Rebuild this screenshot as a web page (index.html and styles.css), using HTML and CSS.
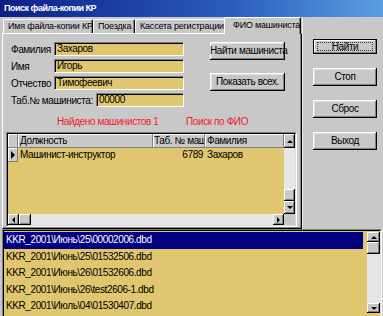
FILE: index.html
```html
<!DOCTYPE html>
<html lang="ru">
<head>
    <meta charset="UTF-8">
    <title>Поиск файла-копии КР</title>
    <link rel="stylesheet" href="styles.css">
</head>
<body>

<div class="window">
    <div class="titlebar">Поиск файла-копии КР</div>

    <div class="main">
        <div class="pages">
            <div class="tabs">
                <div class="tab tab--1">Имя файла-копии КР</div>
                <div class="tab tab--2">Поездка</div>
                <div class="tab tab--3">Кассета регистрации</div>
                <div class="tab tab--active">ФИО машиниста</div>
            </div>

            <div class="sheet">
                <div class="top">
                    <div class="fields">
                        <div class="row"><span class="lbl">Фамилия</span><span class="edit">Захаров</span></div>
                        <div class="row"><span class="lbl">Имя</span><span class="edit">Игорь</span></div>
                        <div class="row"><span class="lbl">Отчество</span><span class="edit">Тимофеевич</span></div>
                        <div class="row row--tab"><span class="lbl lbl--wide">Таб.№ машиниста:</span><span class="edit edit--short">00000</span></div>
                    </div>
                    <div class="pbtns">
                        <div class="btn btn--wide">Найти машиниста</div>
                        <div class="btn btn--wide">Показать всех.</div>
                    </div>
                </div>

                <div class="status">
                    <span class="found">Найдено машинистов 1</span>
                    <span>Поиск по ФИО</span>
                </div>

                <div class="grid">
                    <div class="grid-in">
                        <div class="gbody">
                            <div class="gcols">
                                <div class="grow ghead">
                                    <div class="c c--ind"></div>
                                    <div class="c c--pos">Должность</div>
                                    <div class="c c--num">Таб. № маш</div>
                                    <div class="c c--name">Фамилия</div>
                                </div>
                                <div class="grow">
                                    <div class="c c--ind"><span class="tri-r"></span></div>
                                    <div class="c c--pos">Машинист-инструктор</div>
                                    <div class="c c--num num">6789</div>
                                    <div class="c c--name">Захаров</div>
                                </div>
                                <div class="gfill"></div>
                            </div>
                            <div class="vscroll">
                                <div class="sbtn sbtn--head"><span class="tri-u"></span></div>
                                <div class="track"></div>
                                <div class="thumb"></div>
                                <div class="sbtn sbtn--down"><span class="tri-d"></span></div>
                            </div>
                        </div>
                        <div class="hscroll">
                            <div class="sbtn sbtn--h"><span class="tri-l"></span></div>
                            <div class="thumb thumb--h"></div>
                            <div class="track"></div>
                            <div class="sbtn sbtn--h"><span class="tri-r small"></span></div>
                            <div class="corner"></div>
                        </div>
                    </div>
                </div>
            </div>
        </div>

        <div class="side">
            <div class="btn btn--default"><span class="focus">Найти</span></div>
            <div class="btn">Стоп</div>
            <div class="btn">Сброс</div>
            <div class="btn">Выход</div>
        </div>
    </div>

    <div class="list">
        <div class="list-in">
            <div class="items">
                <div class="item item--sel">KKR_2001\Июнь\25\00002006.dbd</div>
                <div class="item">KKR_2001\Июнь\25\01532506.dbd</div>
                <div class="item">KKR_2001\Июнь\26\01532606.dbd</div>
                <div class="item">KKR_2001\Июнь\26\test2606-1.dbd</div>
                <div class="item">KKR_2001\Июль\04\01530407.dbd</div>
            </div>
            <div class="lscroll">
                <div class="sbtn sbtn--l"><span class="tri-u"></span></div>
                <div class="thumb thumb--l"></div>
                <div class="track"></div>
                <div class="sbtn sbtn--l"><span class="tri-d"></span></div>
            </div>
        </div>
    </div>
</div>

</body>
</html>
```

FILE: styles.css
```css
* {
    margin: 0;
    padding: 0;
    box-sizing: border-box;
}

body {
    background: #c8c8c8;
}

.window {
    width: 383px;
    height: 316px;
    overflow: hidden;
    background: #c8c8c8;
    font-family: "Liberation Sans", Arial, sans-serif;
    font-size: 10px;
    letter-spacing: -0.4px;
    color: #000;
}

.titlebar {
    height: 17px;
    line-height: 16px;
    padding-left: 4px;
    color: #fff;
    font-weight: bold;
    font-size: 9px;
    letter-spacing: -0.5px;
    background: linear-gradient(to right, #0c1f86, #2a5cc0 60%, #5a9fe2);
}

.main {
    display: flex;
    height: 212px;
}

/* page control */
.pages {
    width: 302px;
    padding-left: 2px;
    display: flex;
    flex-direction: column;
}

.tabs {
    height: 16px;
    display: flex;
    align-items: flex-end;
    padding-left: 1px;
    font-size: 9px;
    letter-spacing: -0.2px;
}

.tab {
    height: 14px;
    line-height: 12px;
    padding-left: 4px;
    white-space: nowrap;
    border-top: 1px solid #fff;
    border-left: 1px solid #fff;
    border-right: 1px solid #000;
    box-shadow: inset -1px 0 #808080;
    border-radius: 2px 2px 0 0;
}

.tab--1 { width: 90px; }
.tab--2 { width: 42px; }
.tab--3 { width: 91px; }

.tab--active {
    position: relative;
    z-index: 1;
    height: 17px;
    width: 77px;
    margin: 0 0 -1px -2px;
    padding-left: 8px;
    line-height: 14px;
    background: #c8c8c8;
}

.sheet {
    flex: 1;
    border-top: 1px solid #fff;
    border-left: 1px solid #fff;
    border-right: 1px solid #000;
    border-bottom: 1px solid #000;
    box-shadow: inset -1px -1px #808080;
}

.top {
    display: flex;
    padding-top: 8px;
}

.fields {
    width: 181px;
    padding-left: 8px;
}

.row {
    display: flex;
    align-items: center;
    height: 14px;
    margin-bottom: 3px;
}

.row--tab {
    margin-top: 2px;
}

.lbl {
    width: 43px;
    white-space: nowrap;
}

.lbl--wide {
    width: 85px;
}

.edit {
    width: 130px;
    height: 14px;
    line-height: 11px;
    padding-left: 2px;
    background: #dfc66f;
    border-top: 1px solid #808080;
    border-left: 1px solid #808080;
    border-right: 1px solid #fff;
    border-bottom: 1px solid #fff;
    box-shadow: inset 1px 1px #000;
}

.edit--short {
    width: 88px;
}

.pbtns {
    margin-left: 26px;
    display: flex;
    flex-direction: column;
    gap: 13px;
}

.btn {
    width: 64px;
    height: 18px;
    line-height: 17px;
    text-align: center;
    white-space: nowrap;
    background: #c8c8c8;
    box-shadow: inset -1px -1px #000, inset 1px 1px #fff, inset -2px -2px #808080, inset 2px 2px #e0e0e0;
}

.btn--wide {
    width: 75px;
}

.btn--default {
    height: 15px;
    line-height: 13px;
    border: 1px solid #000;
    padding: 2px 3px;
    box-shadow: inset -1px -1px #808080, inset 1px 1px #fff;
}

.focus {
    display: block;
    height: 9px;
    line-height: 8px;
    border: 1px dotted #333;
}

.side {
    flex: 1;
    display: flex;
    flex-direction: column;
    align-items: flex-start;
    gap: 14px;
    padding: 22px 0 0 10px;
    border-left: 1px solid #e8e8e8;
}

.status {
    display: flex;
    margin-top: 6px;
    padding-left: 54px;
    height: 12px;
    line-height: 12px;
    color: #f0202a;
}

.found {
    width: 129px;
}

/* db grid */
.grid {
    margin: 4px 0 0 3px;
    width: 291px;
    height: 95px;
    border: 1px solid;
    border-color: #808080 #fff #fff #808080;
}

.grid-in {
    height: 100%;
    border: 1px solid;
    border-color: #000 #dcdcdc #dcdcdc #000;
    display: flex;
    flex-direction: column;
}

.gbody {
    flex: 1;
    display: flex;
}

.gcols {
    flex: 1;
    display: flex;
    flex-direction: column;
    background: #dfc66f;
}

.grow {
    display: flex;
    height: 14px;
    line-height: 13px;
}

.c {
    white-space: nowrap;
    overflow: hidden;
    padding-left: 2px;
}

.c--ind {
    width: 10px;
    padding: 0;
    background: #c8c8c8;
    border-right: 1px solid #808080;
    border-bottom: 1px solid #808080;
    box-shadow: inset 1px 1px #fff;
    display: flex;
    align-items: center;
    justify-content: center;
}

.c--pos { width: 135px; }
.c--num { width: 52px; padding-left: 1px; }
.c--name { flex: 1; }

.num {
    text-align: right;
    padding-right: 2px;
}

.ghead .c {
    background: #c8c8c8;
    border-right: 1px solid #808080;
    border-bottom: 1px solid #808080;
    box-shadow: inset 1px 1px #fff;
}

.gfill {
    flex: 1;
}

.tri-r {
    width: 0;
    height: 0;
    border-top: 4px solid transparent;
    border-bottom: 4px solid transparent;
    border-left: 4px solid #000;
}

.tri-r.small {
    border-top-width: 3px;
    border-bottom-width: 3px;
    border-left-width: 3px;
}

.tri-l {
    width: 0;
    height: 0;
    border-top: 3px solid transparent;
    border-bottom: 3px solid transparent;
    border-right: 3px solid #000;
}

.tri-u {
    width: 0;
    height: 0;
    border-left: 3px solid transparent;
    border-right: 3px solid transparent;
    border-bottom: 3px solid #000;
}

.tri-d {
    width: 0;
    height: 0;
    border-left: 3px solid transparent;
    border-right: 3px solid transparent;
    border-top: 3px solid #000;
}

/* scrollbars */
.vscroll {
    width: 11px;
    display: flex;
    flex-direction: column;
}

.hscroll {
    height: 11px;
    display: flex;
}

.sbtn,
.thumb {
    background: #c8c8c8;
    box-shadow: inset -1px -1px #000, inset 1px 1px #fff, inset -2px -2px #808080;
    display: flex;
    align-items: center;
    justify-content: center;
}

.sbtn--head { height: 14px; }
.sbtn--down { height: 13px; }
.sbtn--h { width: 11px; }

.thumb {
    height: 12px;
}

.thumb--h {
    width: 12px;
    height: auto;
}

.track {
    flex: 1;
    background: #e6e6e6;
}

.corner {
    width: 11px;
    background: #c8c8c8;
}

/* file list */
.list {
    margin: 0 1px 0 2px;
    height: 100px;
    border: 1px solid;
    border-color: #808080 #fff #fff #808080;
}

.list-in {
    height: 100%;
    border: 1px solid;
    border-color: #000 #dcdcdc #dcdcdc #000;
    background: #dfc66f;
    display: flex;
}

.items {
    flex: 1;
    padding: 1px 4px 0 0;
}

.item {
    height: 16.5px;
    line-height: 16px;
    padding-left: 2px;
    white-space: nowrap;
}

.item--sel {
    background: #000080;
    color: #fff;
}

.lscroll {
    width: 13px;
    margin-top: 1px;
    display: flex;
    flex-direction: column;
    background: #c8c8c8;
    height: 81px;
}

.sbtn--l { height: 10px; }

.thumb--l {
    height: 12px;
}
```
